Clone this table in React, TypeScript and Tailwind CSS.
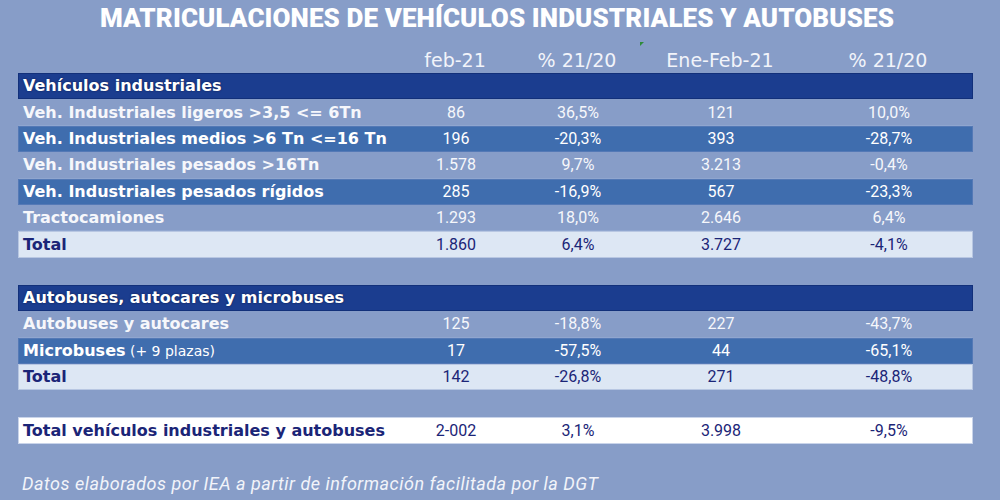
import React from "react";

type Row = {
  label: string;
  extra?: string;
  values: [string, string, string, string];
  tone: "head" | "plain" | "mid" | "total" | "grand";
};

const LABEL_FONT = "font-['DejaVu_Sans',Verdana,sans-serif]";
const NUM_FONT = "font-['Roboto','Liberation_Sans',sans-serif]";

const GRID = "grid grid-cols-[395px_84px_160px_126px_190px]";

const TONE: Record<Row["tone"], string> = {
  head: "bg-[#1b3d8f] border border-[#12307a] text-white",
  plain: "border border-transparent border-b-[#90a6cf] text-[#f6f7fb]",
  mid: "bg-[#3f6dae] border border-[#5479b6] text-white",
  total: "bg-[#dde7f4] border border-[#b8c7e2] text-[#1b2577]",
  grand: "bg-white border border-[#c9d4ea] text-[#1b2577]",
};

const TableRow = ({ row, tall }: { row: Row; tall?: boolean }) => (
  <div className={`${GRID} ${tall ? "h-[27px]" : "h-[26.4px]"} items-center ${TONE[row.tone]}`}>
    <div
      className={`${LABEL_FONT} pl-[4px] text-[16px] font-bold leading-none whitespace-nowrap ${
        row.tone === "head" ? "[text-shadow:0_0_2px_#0b1a4a]" : ""
      }`}
    >
      {row.label}
      {row.extra && <span className="text-[14px] font-normal"> {row.extra}</span>}
    </div>
    {row.values.map((v, i) => (
      <div
        key={i}
        className={`${NUM_FONT} text-center text-[16px] leading-none ${i === 3 ? "pl-[20px]" : ""}`}
      >
        {v}
      </div>
    ))}
  </div>
);

const industriales: Row[] = [
  { label: "Vehículos industriales", values: ["", "", "", ""], tone: "head" },
  { label: "Veh. Industriales ligeros >3,5 <= 6Tn", values: ["86", "36,5%", "121", "10,0%"], tone: "plain" },
  { label: "Veh. Industriales medios >6 Tn <=16 Tn", values: ["196", "-20,3%", "393", "-28,7%"], tone: "mid" },
  { label: "Veh. Industriales pesados >16Tn", values: ["1.578", "9,7%", "3.213", "-0,4%"], tone: "plain" },
  { label: "Veh. Industriales  pesados rígidos", values: ["285", "-16,9%", "567", "-23,3%"], tone: "mid" },
  { label: "Tractocamiones", values: ["1.293", "18,0%", "2.646", "6,4%"], tone: "plain" },
  { label: "Total", values: ["1.860", "6,4%", "3.727", "-4,1%"], tone: "total" },
];

const autobuses: Row[] = [
  { label: "Autobuses, autocares y microbuses", values: ["", "", "", ""], tone: "head" },
  { label: "Autobuses y autocares", values: ["125", "-18,8%", "227", "-43,7%"], tone: "plain" },
  { label: "Microbuses", extra: "(+ 9 plazas)", values: ["17", "-57,5%", "44", "-65,1%"], tone: "mid" },
  { label: "Total", values: ["142", "-26,8%", "271", "-48,8%"], tone: "total" },
];

export default function App() {
  return (
    <div className="w-[1000px] h-[500px] bg-[#879dc8] overflow-hidden relative">
      <h1 className="font-['Roboto','Liberation_Sans',sans-serif] font-black text-white text-[26px] tracking-[0.1px] leading-none text-center pt-[5px] h-[40px] pr-[6px]">
        MATRICULACIONES DE VEHÍCULOS INDUSTRIALES Y AUTOBUSES
      </h1>

      <div className="ml-[18px] w-[955px]">
        <div className={`${GRID} h-[33px] items-center pt-[8px] text-[#f2f4fa] ${LABEL_FONT} text-[19px] leading-none`}>
          <div />
          <div className="text-center">feb-21</div>
          <div className="text-center">% 21/20</div>
          <div className="text-center relative">
            Ene-Feb-21
            <span className="absolute left-[-17px] top-[-9px] w-0 h-0 border-t-[4px] border-t-[#2e8b3a] border-r-[4px] border-r-transparent" />
          </div>
          <div className="text-center pl-[20px]">% 21/20</div>
        </div>

        <div className="flex flex-col">
          {industriales.map((r, i) => (
            <TableRow key={i} row={r} />
          ))}
        </div>

        <div className="h-[27px]" />

        <div className="flex flex-col">
          {autobuses.map((r, i) => (
            <TableRow key={i} row={r} />
          ))}
        </div>

        <div className="h-[27px]" />

        <TableRow
          tall
          row={{
            label: "Total vehículos industriales y autobuses",
            values: ["2-002", "3,1%", "3.998", "-9,5%"],
            tone: "grand",
          }}
        />
      </div>

      <p className="font-['Roboto','Liberation_Sans',sans-serif] italic text-[#f2f4fa] text-[18px] tracking-[0.5px] leading-none pl-[22px] mt-[31px]">
        Datos elaborados por IEA a partir de información facilitada por la DGT
      </p>
    </div>
  );
}
